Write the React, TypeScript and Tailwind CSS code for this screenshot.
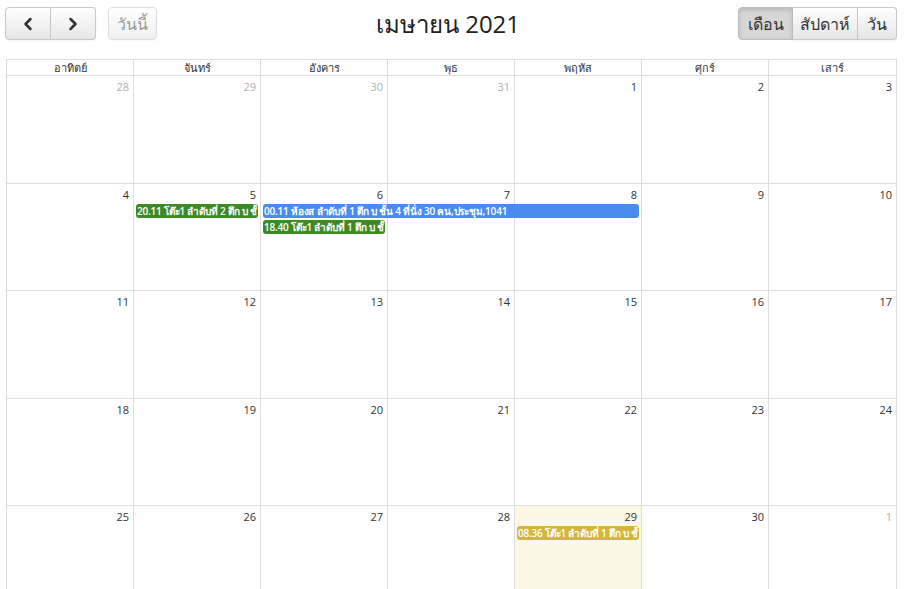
import { ChevronLeft, ChevronRight } from "lucide-react";

type Ev = { title: string; col: number; span: number; row: number; color: string };
type Week = { days: { n: number; muted?: boolean; today?: boolean }[]; events: Ev[] };

const dayNames = ["อาทิตย์", "จันทร์", "อังคาร", "พุธ", "พฤหัส", "ศุกร์", "เสาร์"];

const weeks: Week[] = [
  {
    days: [{ n: 28, muted: true }, { n: 29, muted: true }, { n: 30, muted: true }, { n: 31, muted: true }, { n: 1 }, { n: 2 }, { n: 3 }],
    events: [],
  },
  {
    days: [{ n: 4 }, { n: 5 }, { n: 6 }, { n: 7 }, { n: 8 }, { n: 9 }, { n: 10 }],
    events: [
      { title: "20.11 โต๊ะ1 ลำดับที่ 2 ตึก บ ชั้", col: 2, span: 1, row: 2, color: "bg-[#3c8a26]" },
      { title: "00.11 ห้องส ลำดับที่ 1 ตึก บ ชั้น 4 ที่นั่ง 30 คน,ประชุม,1041", col: 3, span: 3, row: 2, color: "bg-[#4a8cee]" },
      { title: "18.40 โต๊ะ1 ลำดับที่ 1 ตึก บ ชั้", col: 3, span: 1, row: 3, color: "bg-[#3c8a26]" },
    ],
  },
  {
    days: [{ n: 11 }, { n: 12 }, { n: 13 }, { n: 14 }, { n: 15 }, { n: 16 }, { n: 17 }],
    events: [],
  },
  {
    days: [{ n: 18 }, { n: 19 }, { n: 20 }, { n: 21 }, { n: 22 }, { n: 23 }, { n: 24 }],
    events: [],
  },
  {
    days: [{ n: 25 }, { n: 26 }, { n: 27 }, { n: 28 }, { n: 29, today: true }, { n: 30 }, { n: 1, muted: true }],
    events: [{ title: "08.36 โต๊ะ1 ลำดับที่ 1 ตึก บ ชั้", col: 5, span: 1, row: 2, color: "bg-[#d5b53c]" }],
  },
];

const colStart = ["", "col-start-1", "col-start-2", "col-start-3", "col-start-4", "col-start-5", "col-start-6", "col-start-7"];
const colSpan = ["", "col-span-1", "col-span-2", "col-span-3"];
const rowStart = ["", "row-start-1", "row-start-2", "row-start-3"];

const btn =
  "flex items-center justify-center h-[33px] border border-[#c8c8c8] bg-gradient-to-b from-white to-[#e6e6e6] text-[#333] shadow-[inset_0_1px_0_rgba(255,255,255,0.2),0_1px_2px_rgba(0,0,0,0.05)]";

export default function App() {
  return (
    <div
      className="w-[904px] h-[589px] overflow-hidden bg-white text-[#333]"
      style={{ fontFamily: '"Open Sans", "Noto Sans", "DejaVu Sans", sans-serif' }}
    >
      {/* toolbar */}
      <div className="flex justify-between items-start pl-[5px] pr-[7px] pt-[7px] h-[59px]">
        <div className="flex items-center gap-[12px] w-[250px]">
          <div className="flex">
            <button className={`${btn} w-[46px] rounded-l-[4px]`}>
              <ChevronLeft size={20} strokeWidth={3} />
            </button>
            <button className={`${btn} w-[45px] rounded-r-[4px] border-l-0`}>
              <ChevronRight size={20} strokeWidth={3} />
            </button>
          </div>
          <button className={`${btn} w-[49px] rounded-[4px] opacity-60 text-[16px] text-[#555]`}>วันนี้</button>
        </div>
        <div className="text-[24px] leading-[33px] text-[#222] font-medium pr-[6px]">เมษายน 2021</div>
        <div className="flex justify-end w-[250px] text-[16px]">
          <button className="flex items-center justify-center h-[33px] w-[55px] rounded-l-[4px] border border-[#bdbdbd] bg-[#d6d6d6] shadow-[inset_0_2px_4px_rgba(0,0,0,0.15)]">
            เดือน
          </button>
          <button className={`${btn} w-[65px] border-l-0`}>สัปดาห์</button>
          <button className={`${btn} w-[39px] rounded-r-[4px] border-l-0`}>วัน</button>
        </div>
      </div>

      {/* calendar */}
      <div className="pl-[6px] pr-[7px]">
        <div className="border-l border-r border-t border-[#dddddd]">
          <div className="grid grid-cols-7 h-[15px]">
            {dayNames.map((d, i) => (
              <div
                key={d}
                className={`text-center text-[11px] leading-[15px] ${i < 6 ? "border-r border-[#dddddd]" : ""}`}
              >
                {d}
              </div>
            ))}
          </div>
          {weeks.map((w, wi) => (
            <div
              key={wi}
              className="grid grid-cols-7 grid-rows-[20px_16px_16px_1fr] h-[107.5px] border-t border-[#dddddd]"
            >
              {w.days.map((d, di) => (
                <div
                  key={di}
                  className={`${colStart[di + 1]} row-[1/-1] text-right text-[11px] pt-[4px] pr-[4px] leading-[14px] ${
                    di < 6 ? "border-r border-[#dddddd]" : ""
                  } ${d.muted ? "text-[#b0b0b0]" : "text-[#333]"} ${d.today ? "bg-[#fcf8e3]" : ""}`}
                >
                  {d.n}
                </div>
              ))}
              {w.events.map((e, ei) => (
                <div
                  key={ei}
                  className={`${colStart[e.col]} ${colSpan[e.span]} ${rowStart[e.row]} self-start ml-[2px] mr-[3px] h-[14px] rounded-[3px] ${e.color} text-white text-[10px] font-semibold leading-[14px] px-[1px] whitespace-nowrap overflow-hidden tracking-[-0.2px] z-10`}
                >
                  {e.title}
                </div>
              ))}
            </div>
          ))}
        </div>
      </div>
    </div>
  );
}
